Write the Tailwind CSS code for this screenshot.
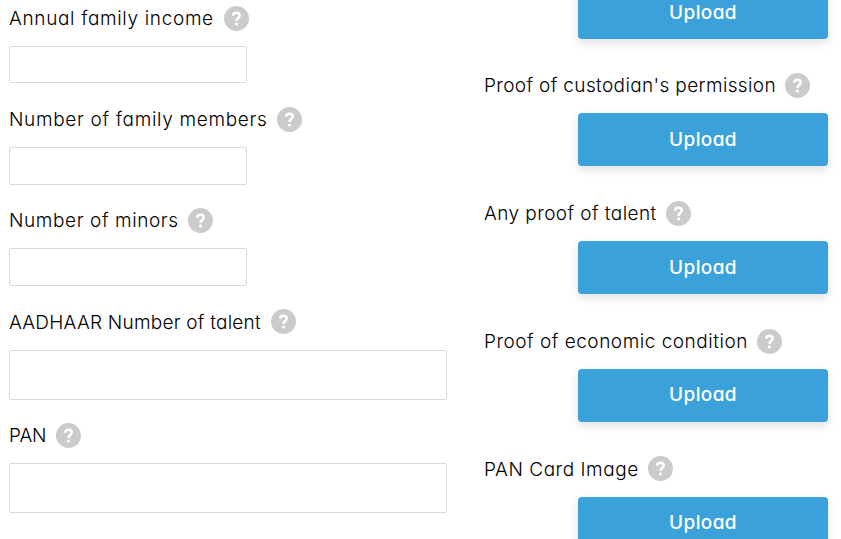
<!DOCTYPE html>
<html lang="en">
<head>
<meta charset="utf-8">
<title>Application form</title>
<script src="https://cdn.jsdelivr.net/npm/@tailwindcss/browser@4"></script>
</head>
<body class="bg-white text-black">
<svg class="hidden">
  <symbol id="help" viewBox="0 0 25 25">
    <circle cx="12.5" cy="12.5" r="12.5" fill="#cbcbcb"/>
    <path d="M9.1 9.8C9.2 7.8 10.5 6.8 12.4 6.8s3.3 1.1 3.3 2.8c0 2.4-3.2 2.5-3.2 5.3" fill="none" stroke="#fff" stroke-width="2.5"/>
    <circle cx="12.5" cy="18" r="1.6" fill="#fff"/>
  </symbol>
</svg>
<main class="flex h-[539px] w-[841px] overflow-hidden font-['Inter',sans-serif] text-[19px] leading-[25px] font-light whitespace-nowrap [font-feature-settings:'cv11']">
  <section class="flex w-[484px] flex-col pt-[6px] pl-[9px]">
    <div class="flex h-[40px] items-start"><label class="w-[215px] tracking-[0.66px]">Annual family income</label><svg class="size-[25px]"><use href="#help"/></svg></div>
    <input class="mb-[24px] h-[37px] w-[238px] shrink-0 rounded-[2px] border border-[#d9d9d9]">
    <div class="flex h-[40px] items-start"><label class="w-[268px] tracking-[0.68px]">Number of family members</label><svg class="size-[25px]"><use href="#help"/></svg></div>
    <input class="mb-[23px] h-[38px] w-[238px] shrink-0 rounded-[2px] border border-[#d9d9d9]">
    <div class="flex h-[40px] items-start"><label class="w-[179px] tracking-[0.6px]">Number of minors</label><svg class="size-[25px]"><use href="#help"/></svg></div>
    <input class="mb-[23px] h-[38px] w-[238px] shrink-0 rounded-[2px] border border-[#d9d9d9]">
    <div class="flex h-[41px] items-start"><label class="w-[262px] pt-px tracking-[0.24px]">AADHAAR Number of talent</label><svg class="size-[25px]"><use href="#help"/></svg></div>
    <input class="mb-[23px] h-[50px] w-[438px] shrink-0 rounded-[2px] border border-[#d9d9d9]">
    <div class="flex h-[40px] items-start"><label class="w-[47px] tracking-[-0.15px]">PAN</label><svg class="size-[25px]"><use href="#help"/></svg></div>
    <input class="h-[50px] w-[438px] shrink-0 rounded-[2px] border border-[#d9d9d9]">
  </section>
  <section class="-mt-[14px] flex w-[344px] flex-col">
    <button class="mb-[34px] h-[53px] w-[250px] shrink-0 self-end rounded-[4px] bg-[#3ba1db] pb-px font-medium tracking-[0.4px] text-white shadow-[0_4px_10px_rgba(0,0,0,0.12)]">Upload</button>
    <div class="flex h-[40px] shrink-0 items-start"><label class="w-[301px] tracking-[0.37px]">Proof of custodian's permission</label><svg class="size-[25px]"><use href="#help"/></svg></div>
    <button class="mb-[35px] h-[53px] w-[250px] shrink-0 self-end rounded-[4px] bg-[#3ba1db] font-medium tracking-[0.4px] text-white shadow-[0_4px_10px_rgba(0,0,0,0.12)]">Upload</button>
    <div class="flex h-[40px] shrink-0 items-start"><label class="w-[182px] tracking-[0.44px]">Any proof of talent</label><svg class="size-[25px]"><use href="#help"/></svg></div>
    <button class="mb-[35px] h-[53px] w-[250px] shrink-0 self-end rounded-[4px] bg-[#3ba1db] font-medium tracking-[0.4px] text-white shadow-[0_4px_10px_rgba(0,0,0,0.12)]">Upload</button>
    <div class="flex h-[40px] shrink-0 items-start"><label class="w-[273px] tracking-[0.52px]">Proof of economic condition</label><svg class="size-[25px]"><use href="#help"/></svg></div>
    <button class="mb-[34px] h-[53px] w-[250px] shrink-0 self-end rounded-[4px] bg-[#3ba1db] pb-[2px] font-medium tracking-[0.4px] text-white shadow-[0_4px_10px_rgba(0,0,0,0.12)]">Upload</button>
    <div class="flex h-[41px] shrink-0 items-start"><label class="w-[164px] pt-px tracking-[0.54px]">PAN Card Image</label><svg class="size-[25px]"><use href="#help"/></svg></div>
    <button class="h-[53px] w-[250px] shrink-0 self-end rounded-[4px] bg-[#3ba1db] pb-[2px] font-medium tracking-[0.4px] text-white shadow-[0_4px_10px_rgba(0,0,0,0.12)]">Upload</button>
  </section>
</main>
</body>
</html>
